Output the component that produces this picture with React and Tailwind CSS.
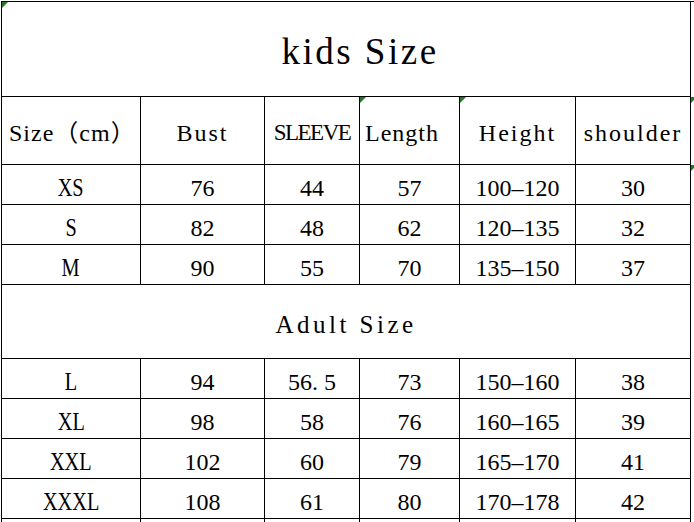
import React from 'react';

const kids = [
  ['XS', '76', '44', '57', '100–120', '30'],
  ['S', '82', '48', '62', '120–135', '32'],
  ['M', '90', '55', '70', '135–150', '37'],
];

const adults = [
  ['L', '94', '56.5', '73', '150–160', '38'],
  ['XL', '98', '58', '76', '160–165', '39'],
  ['XXL', '102', '60', '79', '165–170', '41'],
  ['XXXL', '108', '61', '80', '170–178', '42'],
];

// small green corner marks, like the ones a spreadsheet shows on number-as-text cells
function Mark({ className = '' }) {
  return <span className={`absolute w-[6px] h-[6px] bg-[#1e7b1e] [clip-path:polygon(0_0,100%_0,0_100%)] ${className}`} />;
}

const cell = 'relative flex items-center justify-center border-r border-b border-black';

function DataRow({ row }) {
  return (
    <>
      <div className={`${cell} pt-1.5`}>
        <span className="inline-block text-[26px] scale-x-[0.78]">{row[0]}</span>
      </div>
      {row.slice(1).map((v, i) => (
        <div key={i} className={`${cell} pt-1.5`}>
          {v === '56.5' ? (
            <span>56<span className="inline-block w-[12px]">.</span>5</span>
          ) : v}
        </div>
      ))}
    </>
  );
}

export default function App() {
  return (
    <div className="relative w-[694px] h-[522px] overflow-hidden bg-white pt-px pl-px text-black font-['Liberation_Serif','Noto_Sans_CJK_SC',serif] text-[24px] leading-none">
      <div className="grid grid-cols-[139px_124px_95px_100px_116px_115px] grid-rows-[95px_68px_40px_40px_40px_74px_40px_40px_40px_40px_40px] border-l border-t border-black">
        <div className={`${cell} col-span-6 pl-[28px] pt-1 text-[37px] tracking-[2.5px]`}>
          <Mark className="left-0 top-0" />
          kids Size
        </div>

        <div className={`${cell} justify-start pl-[7px] pt-1 tracking-[1px]`}>Size（cm）</div>
        <div className={`${cell} pt-1 tracking-[2px]`}>Bust</div>
        <div className={`${cell} pt-1 text-[23px] tracking-[-1.5px]`}>SLEEVE</div>
        <div className={`${cell} justify-start pl-[5px] pt-1 tracking-[1px]`}>
          <Mark className="left-0 top-0" />
          Length
        </div>
        <div className={`${cell} pt-1 tracking-[2px]`}>
          <Mark className="left-0 top-0" />
          Height
        </div>
        <div className={`${cell} pt-1 tracking-[2px]`}>shoulder</div>

        {kids.map((r) => <DataRow key={r[0]} row={r} />)}

        <div className={`${cell} col-span-6 pt-[5px] text-[25px] tracking-[3.5px]`}>Adult Size</div>

        {adults.map((r) => <DataRow key={r[0]} row={r} />)}

        {[0, 1, 2, 3, 4, 5].map((i) => <div key={i} className={cell} />)}
      </div>

      <Mark className="left-[691px] top-[97px]" />
      <Mark className="left-[691px] top-[165px]" />
    </div>
  );
}
